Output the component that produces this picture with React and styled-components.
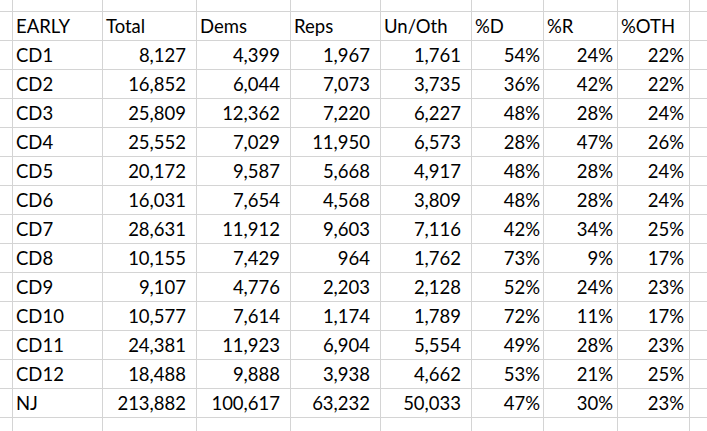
import React from 'react';
import styled, { createGlobalStyle } from 'styled-components';

const GlobalStyle = createGlobalStyle`
  html, body {
    margin: 0;
    padding: 0;
    background: #ffffff;
  }
`;

const Sheet = styled.div`
  display: grid;
  grid-template-columns: 12px 89px 93px 93px 89px 90px 71px 73px 71px 1fr;
  grid-template-rows: 11px repeat(14, 28px) 1fr;
  gap: 1px;
  width: 707px;
  height: 431px;
  overflow: hidden;
  background: #d4d4d4;
  font-family: Lato, 'Liberation Sans', sans-serif;
  font-size: 18.5px;
  color: #000;
`;

const Cell = styled.div`
  background: #ffffff;
  box-sizing: border-box;
  padding-top: 1px;
  line-height: 27px;
  white-space: nowrap;
  overflow: hidden;
  text-align: ${(p) => (p.$right ? 'right' : 'left')};
  padding-left: ${(p) => (p.$right ? 0 : 3)}px;
  padding-right: ${(p) => (p.$right ? p.$pad : 0)}px;
`;

const header = ['EARLY', 'Total', 'Dems', 'Reps', 'Un/Oth', '%D', '%R', '%OTH'];

const rows = [
  ['CD1', '8,127', '4,399', '1,967', '1,761', '54%', '24%', '22%'],
  ['CD2', '16,852', '6,044', '7,073', '3,735', '36%', '42%', '22%'],
  ['CD3', '25,809', '12,362', '7,220', '6,227', '48%', '28%', '24%'],
  ['CD4', '25,552', '7,029', '11,950', '6,573', '28%', '47%', '26%'],
  ['CD5', '20,172', '9,587', '5,668', '4,917', '48%', '28%', '24%'],
  ['CD6', '16,031', '7,654', '4,568', '3,809', '48%', '28%', '24%'],
  ['CD7', '28,631', '11,912', '9,603', '7,116', '42%', '34%', '25%'],
  ['CD8', '10,155', '7,429', '964', '1,762', '73%', '9%', '17%'],
  ['CD9', '9,107', '4,776', '2,203', '2,128', '52%', '24%', '23%'],
  ['CD10', '10,577', '7,614', '1,174', '1,789', '72%', '11%', '17%'],
  ['CD11', '24,381', '11,923', '6,904', '5,554', '49%', '28%', '23%'],
  ['CD12', '18,488', '9,888', '3,938', '4,662', '53%', '21%', '25%'],
  ['NJ', '213,882', '100,617', '63,232', '50,033', '47%', '30%', '23%'],
];

// right padding per value column (numbers sit further from the line than percents)
const pads = [0, 10, 10, 10, 10, 3, 4, 5];

const blankRow = () => Array.from({ length: 10 }, () => '');

export default function App() {
  const grid = [
    blankRow(),
    ['', ...header, ''],
    ...rows.map((r) => ['', ...r, '']),
    blankRow(),
  ];

  return (
    <>
      <GlobalStyle />
      <Sheet>
        {grid.map((row, ri) =>
          row.map((value, ci) => {
            const col = ci - 1;
            const isValue = ri > 1 && ri < grid.length - 1 && col > 0 && col < 8;
            return (
              <Cell key={`${ri}-${ci}`} $right={isValue} $pad={pads[col] || 0}>
                {value}
              </Cell>
            );
          })
        )}
      </Sheet>
    </>
  );
}
